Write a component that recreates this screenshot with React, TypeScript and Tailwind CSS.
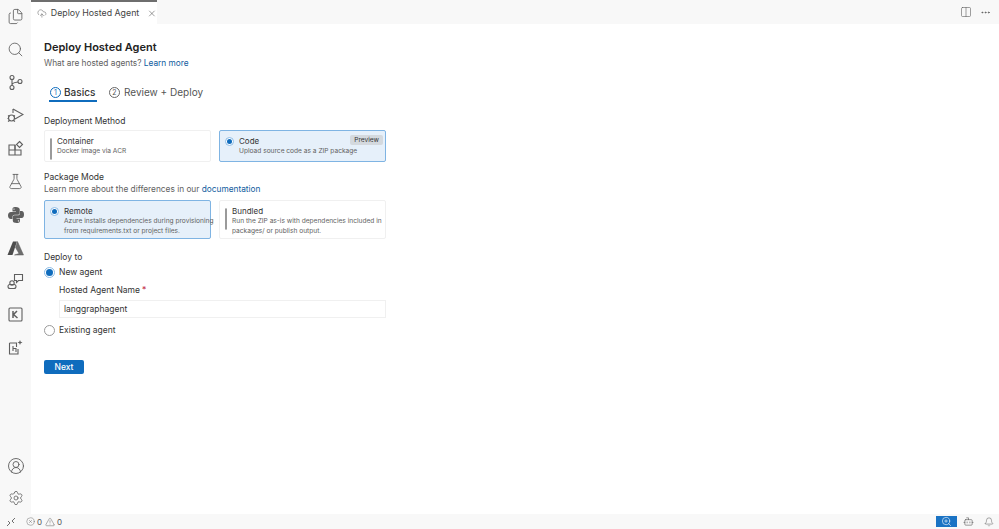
import React from 'react';
import { Files, Search, X, Settings, Bell, CircleUserRound, ZoomIn, Ellipsis, Columns2, CloudUpload, CircleX, TriangleAlert, FlaskConical, Bot } from 'lucide-react';

const font = "font-['Inter',sans-serif]";

const Radio = ({ checked, large }: { checked?: boolean; large?: boolean }) => {
  const size = large ? 'w-[11px] h-[11px]' : 'w-[9px] h-[9px]';
  if (checked) {
    return (
      <span className={`${size} shrink-0 rounded-full bg-white border border-[#8dbce6] flex items-center justify-center`}>
        <span className={`${large ? 'w-[7px] h-[7px]' : 'w-[5px] h-[5px]'} rounded-full bg-[#0f6cbd]`} />
      </span>
    );
  }
  return <span className={`${size} shrink-0 rounded-full bg-white border border-[#9a9a9a]`} />;
};

const OptionCard = ({
  title,
  lines,
  selected,
  badge,
}: {
  title: string;
  lines: string[];
  selected?: boolean;
  badge?: string;
}) => (
  <div
    className={`relative flex gap-[5px] rounded-[2px] pl-[5px] pr-[2px] pt-[5px] ${
      selected ? 'border border-[#7fb4e3] bg-[#e6f0fa]' : 'border border-[#f0f0f0] bg-white'
    }`}
  >
    <div className="pt-[1px]">
      <Radio checked={selected} />
    </div>
    <div className="min-w-0">
      <div className="text-[8px] leading-[10px] text-[#333]">{title}</div>
      <div className="mt-[1px] text-[6.6px] leading-[9.5px] text-[#616161] whitespace-nowrap">
        {lines.map((l) => (
          <div key={l}>{l}</div>
        ))}
      </div>
    </div>
    {badge && (
      <span className="absolute right-[2px] top-[4px] rounded-[2px] bg-[#d4d9de] px-[4px] text-[6.6px] leading-[10px] text-[#333]">
        {badge}
      </span>
    )}
  </div>
);

const iconClass = 'text-[#5f5f5f]';

const ActivityBar = () => (
  <aside className="w-[31px] shrink-0 bg-[#f8f8f8] flex flex-col items-center pt-[8px] pb-[8px]">
    <div className="flex flex-col items-center gap-[16px]">
      <Files size={17} strokeWidth={1.2} className={iconClass} />
      <Search size={17} strokeWidth={1.2} className={iconClass} />
      <svg width="17" height="17" viewBox="0 0 17 17" fill="none" stroke="#5f5f5f" strokeWidth="1.1">
        <circle cx="5" cy="3.5" r="2" />
        <circle cx="5" cy="13.5" r="2" />
        <circle cx="13" cy="7.5" r="2" />
        <path d="M5 5.5v6M11 8c-3 .5-6 .5-6 3" />
      </svg>
      <svg width="17" height="17" viewBox="0 0 17 17" fill="none" stroke="#5f5f5f" strokeWidth="1.1">
        <path d="M6 2l10 5.5-8 4.5" />
        <path d="M6 2v4" />
        <circle cx="4.5" cy="11" r="3" />
        <path d="M1 8.5l1.5 1M8 8.5l-1.5 1M1 14.5l1.5-1M8 14.5l-1.5-1M.5 11.500h1M7.500 11.500h1" />
      </svg>
      <svg width="17" height="17" viewBox="0 0 17 17" fill="none" stroke="#5f5f5f" strokeWidth="1.1">
        <path d="M2 5h6v10H2zM2 10h12v5H8" />
        <path d="M8 5V10" />
        <path d="M12.500 1.500L15.500 4.500 12.500 7.500 9.500 4.500z" />
      </svg>
      <FlaskConical size={17} strokeWidth={1.2} className={iconClass} />
      <svg width="18" height="18" viewBox="0 0 18 18" fill="#5f5f5f">
        <path d="M8.800 1C5.500 1 5.500 2.400 5.500 3.500V5.500H9V6H3.800C2.200 6 1 7.200 1 9.500S2.200 13 3.800 13H5.500V10.800C5.500 9.500 6.500 8.700 7.700 8.700H11C12.100 8.700 12.700 8 12.700 7V3.300C12.700 2 11.200 1 8.800 1ZM7 2.400a.7.7 0 110 1.400.7.7 0 010-1.400Z" />
        <path d="M13 5V7.200C13 8.500 12 9.300 10.800 9.300H7.500C6.400 9.300 5.800 10 5.800 11V14.700C5.800 16 7.300 17 9.700 17 13 17 13 15.600 13 14.500V12.500H9.500V12H14.700C16.300 12 17 10.800 17 8.500S16.300 5 14.700 5ZM11.500 14.200a.7.7 0 110 1.400.7.7 0 010-1.400Z" />
      </svg>
      <svg width="17" height="17" viewBox="0 0 17 17">
        <path d="M6 1.500h4L5.500 15H0.500Z" fill="#4c4c4c" />
        <path d="M10.500 1.500L16.500 15H7.500L12 13.500 8.500 7.500Z" fill="#6e6e6e" stroke="#5f5f5f" strokeWidth="0.5" />
      </svg>
      <svg width="17" height="17" viewBox="0 0 17 17" fill="none" stroke="#5f5f5f" strokeWidth="1.1">
        <path d="M7.500 1.500h8v6h-4l-2 2v-2h-2z" />
        <circle cx="5" cy="10" r="2.200" />
        <rect x="1" y="11.500" width="8" height="4" rx="2" />
      </svg>
      <svg width="17" height="17" viewBox="0 0 17 17" fill="none" stroke="#5f5f5f" strokeWidth="1.1">
        <rect x="2" y="2" width="13" height="13" rx="1" />
        <path d="M6 5v7M10 5L6.500 8.500 10.500 12" strokeWidth="1.500" />
      </svg>
      <svg width="17" height="17" viewBox="0 0 17 17" fill="none" stroke="#5f5f5f" strokeWidth="1.1">
        <path d="M2.500 4h7v3.500H9M2.500 4v11h8.500V10" />
        <path d="M6 7v5M6 9.500h3V13" />
        <path d="M13 1l.7 1.800 1.800.7-1.800.7L13 6l-.7-1.800-1.800-.7 1.800-.7z" fill="#5f5f5f" stroke="none" />
      </svg>
    </div>
    <div className="mt-auto flex flex-col items-center gap-[15px]">
      <CircleUserRound size={18} strokeWidth={1.2} className={iconClass} />
      <Settings size={16} strokeWidth={1.2} className={iconClass} />
    </div>
  </aside>
);

const TabBar = () => (
  <div className="h-[24px] shrink-0 flex items-stretch bg-[#f8f8f8]">
    <div className="w-[126px] border-t-2 border-[#6e6e6e] bg-white flex items-center pl-[6px] gap-[4px]">
      <CloudUpload size={11} strokeWidth={1.3} className={iconClass} />
      <span className="text-[8.8px] text-[#444] whitespace-nowrap">Deploy Hosted Agent</span>
      <X size={11} strokeWidth={1.3} className="ml-[4px] text-[#444]" />
    </div>
    <div className="ml-auto flex items-center gap-[8px] pr-[8px]">
      <Columns2 size={12} strokeWidth={1.2} className={iconClass} />
      <Ellipsis size={11} className={iconClass} />
    </div>
  </div>
);

const StepTabs = () => (
  <div className="mt-[16px] flex items-end gap-[12px] pl-[5px] text-[10px] leading-[14px]">
    <div className="flex items-center gap-[3px] border-b-2 border-[#0f6cbd] px-[1px] pb-[1px] w-[48px]">
      <span className="w-[11px] h-[11px] rounded-full border border-[#0f6cbd] text-[#0f6cbd] text-[7px] leading-[9px] text-center shrink-0">1</span>
      <span className="font-medium text-[#333]">Basics</span>
    </div>
    <div className="flex items-center gap-[4px] pb-[3px] text-[#555]">
      <span className="w-[11px] h-[11px] rounded-full border border-[#666] text-[7px] leading-[9px] text-center shrink-0">2</span>
      <span>Review + Deploy</span>
    </div>
  </div>
);

const Form = () => (
  <main className="flex-1 bg-white pl-[13px] pt-[16px] text-[#333]">
    <h1 className="text-[11px] leading-[14px] font-semibold text-[#222]">Deploy Hosted Agent</h1>
    <p className="mt-[4px] text-[8.3px] leading-[11px] text-[#616161]">
      What are hosted agents? <span className="text-[#0f5c9e]">Learn more</span>
    </p>

    <StepTabs />

    <div className="mt-[14px] text-[8.500px] leading-[11px]">Deployment Method</div>
    <div className="mt-[3px] grid grid-cols-2 gap-[8px] w-[342px] h-[30px]">
      <OptionCard title="Container" lines={['Docker image via ACR']} />
      <OptionCard title="Code" lines={['Upload source code as a ZIP package']} selected badge="Preview" />
    </div>

    <div className="mt-[12px] text-[8.500px] leading-[11px]">Package Mode</div>
    <p className="mt-[1px] text-[8.300px] leading-[11px] text-[#616161]">
      Learn more about the differences in our <span className="text-[#0f5c9e]">documentation</span>
    </p>
    <div className="mt-[5px] grid grid-cols-2 gap-[8px] w-[342px] h-[39px]">
      <OptionCard
        title="Remote"
        lines={['Azure installs dependencies during provisioning', 'from requirements.txt or project files.']}
        selected
      />
      <OptionCard
        title="Bundled"
        lines={['Run the ZIP as-is with dependencies included in', 'packages/ or publish output.']}
      />
    </div>

    <div className="mt-[13px] text-[8.500px] leading-[11px]">Deploy to</div>
    <div className="mt-[4px] flex items-center gap-[4px] text-[8.500px] leading-[11px]">
      <Radio checked large />
      <span>New agent</span>
    </div>
    <div className="ml-[15px] mt-[7px] text-[8.500px] leading-[11px]">
      Hosted Agent Name<span className="ml-[2px] text-[#c4314b]">*</span>
    </div>
    <div className="ml-[15px] mt-[4px] w-[327px] h-[18px] border border-[#f0f0f0] bg-white flex items-center pl-[4px] text-[8.500px]">
      langgraphagent
    </div>
    <div className="mt-[7px] flex items-center gap-[4px] text-[8.500px] leading-[11px]">
      <Radio large />
      <span>Existing agent</span>
    </div>

    <button className="mt-[24px] w-[40px] h-[14px] rounded-[2px] bg-[#0f6cbd] text-white text-[8.500px] leading-[14px] font-medium block">
      Next
    </button>
  </main>
);

const StatusBar = () => (
  <footer className="h-[15px] shrink-0 bg-[#f8f8f8] flex items-center text-[8px] text-[#555]">
    <svg className="ml-[6px]" width="10" height="10" viewBox="0 0 10 10" fill="none" stroke="#5f5f5f" strokeWidth="0.9">
      <path d="M1 9l3-3-2-2M9 1L6 4l2 2" />
    </svg>
    <div className="ml-[10px] flex items-center gap-[2px]">
      <CircleX size={9} strokeWidth={1.1} />
      <span>0</span>
      <TriangleAlert size={10} strokeWidth={1.1} className="ml-[1px]" />
      <span>0</span>
    </div>
    <div className="ml-auto flex items-center self-stretch">
      <div className="w-[21px] bg-[#1a73c4] flex items-center justify-center">
        <ZoomIn size={11} strokeWidth={1.3} className="text-white" />
      </div>
      <Bot size={11} strokeWidth={1.3} className="ml-[6px]" />
      <Bell size={10} strokeWidth={1.2} className="ml-[10px] mr-[5px]" />
    </div>
  </footer>
);

export default function App() {
  return (
    <div className={`${font} w-[999px] h-[529px] flex flex-col overflow-hidden bg-white`}>
      <div className="flex flex-1 min-h-0">
        <ActivityBar />
        <div className="flex-1 flex flex-col min-w-0">
          <TabBar />
          <Form />
        </div>
      </div>
      <StatusBar />
    </div>
  );
}
